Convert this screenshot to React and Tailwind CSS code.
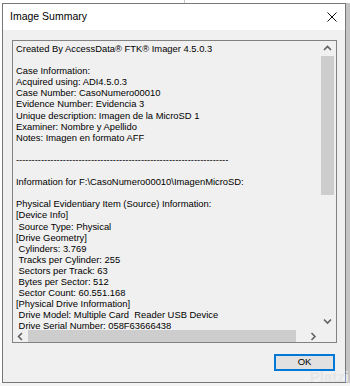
import React from "react";

const lines = [
  "Created By AccessData® FTK® Imager 4.5.0.3",
  "",
  "Case Information: ",
  "Acquired using: ADI4.5.0.3",
  "Case Number: CasoNumero00010",
  "Evidence Number: Evidencia 3",
  "Unique description: Imagen de la MicroSD 1",
  "Examiner: Nombre y Apellido",
  "Notes: Imagen en formato AFF",
  "",
  "-".repeat(68),
  "",
  "Information for F:\\CasoNumero00010\\ImagenMicroSD:",
  "",
  "Physical Evidentiary Item (Source) Information:",
  "[Device Info]",
  " Source Type: Physical",
  "[Drive Geometry]",
  " Cylinders: 3.769",
  " Tracks per Cylinder: 255",
  " Sectors per Track: 63",
  " Bytes per Sector: 512",
  " Sector Count: 60.551.168",
  "[Physical Drive Information]",
  " Drive Model: Multiple Card  Reader USB Device",
  " Drive Serial Number: 058F63666438",
];

const Chevron = ({ dir }) => {
  const d = {
    up: "M1 5 L4.5 1.5 L8 5",
    down: "M1 1.5 L4.5 5 L8 1.5",
    left: "M5 1 L1.5 4.5 L5 8",
    right: "M1.5 1 L5 4.5 L1.5 8",
  }[dir];
  const horiz = dir === "left" || dir === "right";
  return (
    <svg width={horiz ? 7 : 9} height={horiz ? 9 : 7} viewBox={horiz ? "0 0 7 9" : "0 0 9 7"}>
      <path d={d} fill="none" stroke="#606060" strokeWidth="1.6" />
    </svg>
  );
};

export default function App() {
  return (
    <div
      className="w-[350px] h-[386px] bg-white overflow-hidden flex flex-col"
      style={{ fontFamily: "'Liberation Sans', Arial, sans-serif" }}
    >
      <div className="h-[3px] flex">
        <div className="ml-[184px] w-[1px] bg-[#c8c8c8]" />
      </div>
      <div className="flex">
        <div className="ml-[2px] w-[344px] h-[380px] border border-[#777777] flex flex-col bg-[#f0f0f0]">
          {/* title bar */}
          <div className="h-[26px] bg-white flex items-center justify-between pl-[7px] pr-[8px]">
            <span className="text-[10.5px] text-black">Image Summary</span>
            <svg width="10" height="10" viewBox="0 0 10 10">
              <path d="M0.5 0.5 L9.5 9.5 M9.5 0.5 L0.5 9.5" stroke="#111" strokeWidth="1" />
            </svg>
          </div>

          {/* body */}
          <div className="flex-1 flex flex-col pt-[10px] pl-[9px] relative">
            <div className="w-[325px] h-[303px] border border-[#828282] bg-[#f0f0f0] flex flex-col">
              <div className="flex h-[289px]">
                <div className="w-[308px] overflow-hidden pl-[3px] pt-[2px] text-[9.4px] leading-[11.1px] text-black">
                  {lines.map((l, i) => (
                    <div key={i} className="whitespace-pre h-[11.1px]">
                      {l}
                    </div>
                  ))}
                </div>
                {/* vertical scrollbar */}
                <div className="w-[13px] flex flex-col">
                  <div className="h-[15px] flex items-center justify-center">
                    <Chevron dir="up" />
                  </div>
                  <div className="h-[139px] bg-[#cdcdcd]" />
                  <div className="flex-1" />
                  <div className="h-[17px] flex items-center justify-center">
                    <Chevron dir="down" />
                  </div>
                </div>
              </div>
              {/* horizontal scrollbar */}
              <div className="flex h-[12px]">
                <div className="w-[14px] flex items-center justify-center">
                  <Chevron dir="left" />
                </div>
                <div className="ml-[1px] w-[268px] bg-[#cdcdcd]" />
                <div className="flex-1" />
                <div className="w-[16px] flex items-center justify-center">
                  <Chevron dir="right" />
                </div>
                <div className="w-[15px]" />
              </div>
            </div>

            <div className="flex justify-end pr-[10px] mt-[11px]">
              <button className="w-[61px] h-[17px] border-2 border-[#0078d7] bg-[#e1e1e1] text-[9.5px] text-black flex items-center justify-center">
                OK
              </button>
            </div>

            <div className="absolute right-[-4px] bottom-[-6px] text-[15px] font-bold text-[#e6e6e6] select-none">
              Platzi
            </div>
          </div>
        </div>
        <div className="w-[4px] h-[380px] bg-[#c4c4c4]" />
      </div>
      <div className="flex-1 bg-[#f4f4f4]" />
    </div>
  );
}
